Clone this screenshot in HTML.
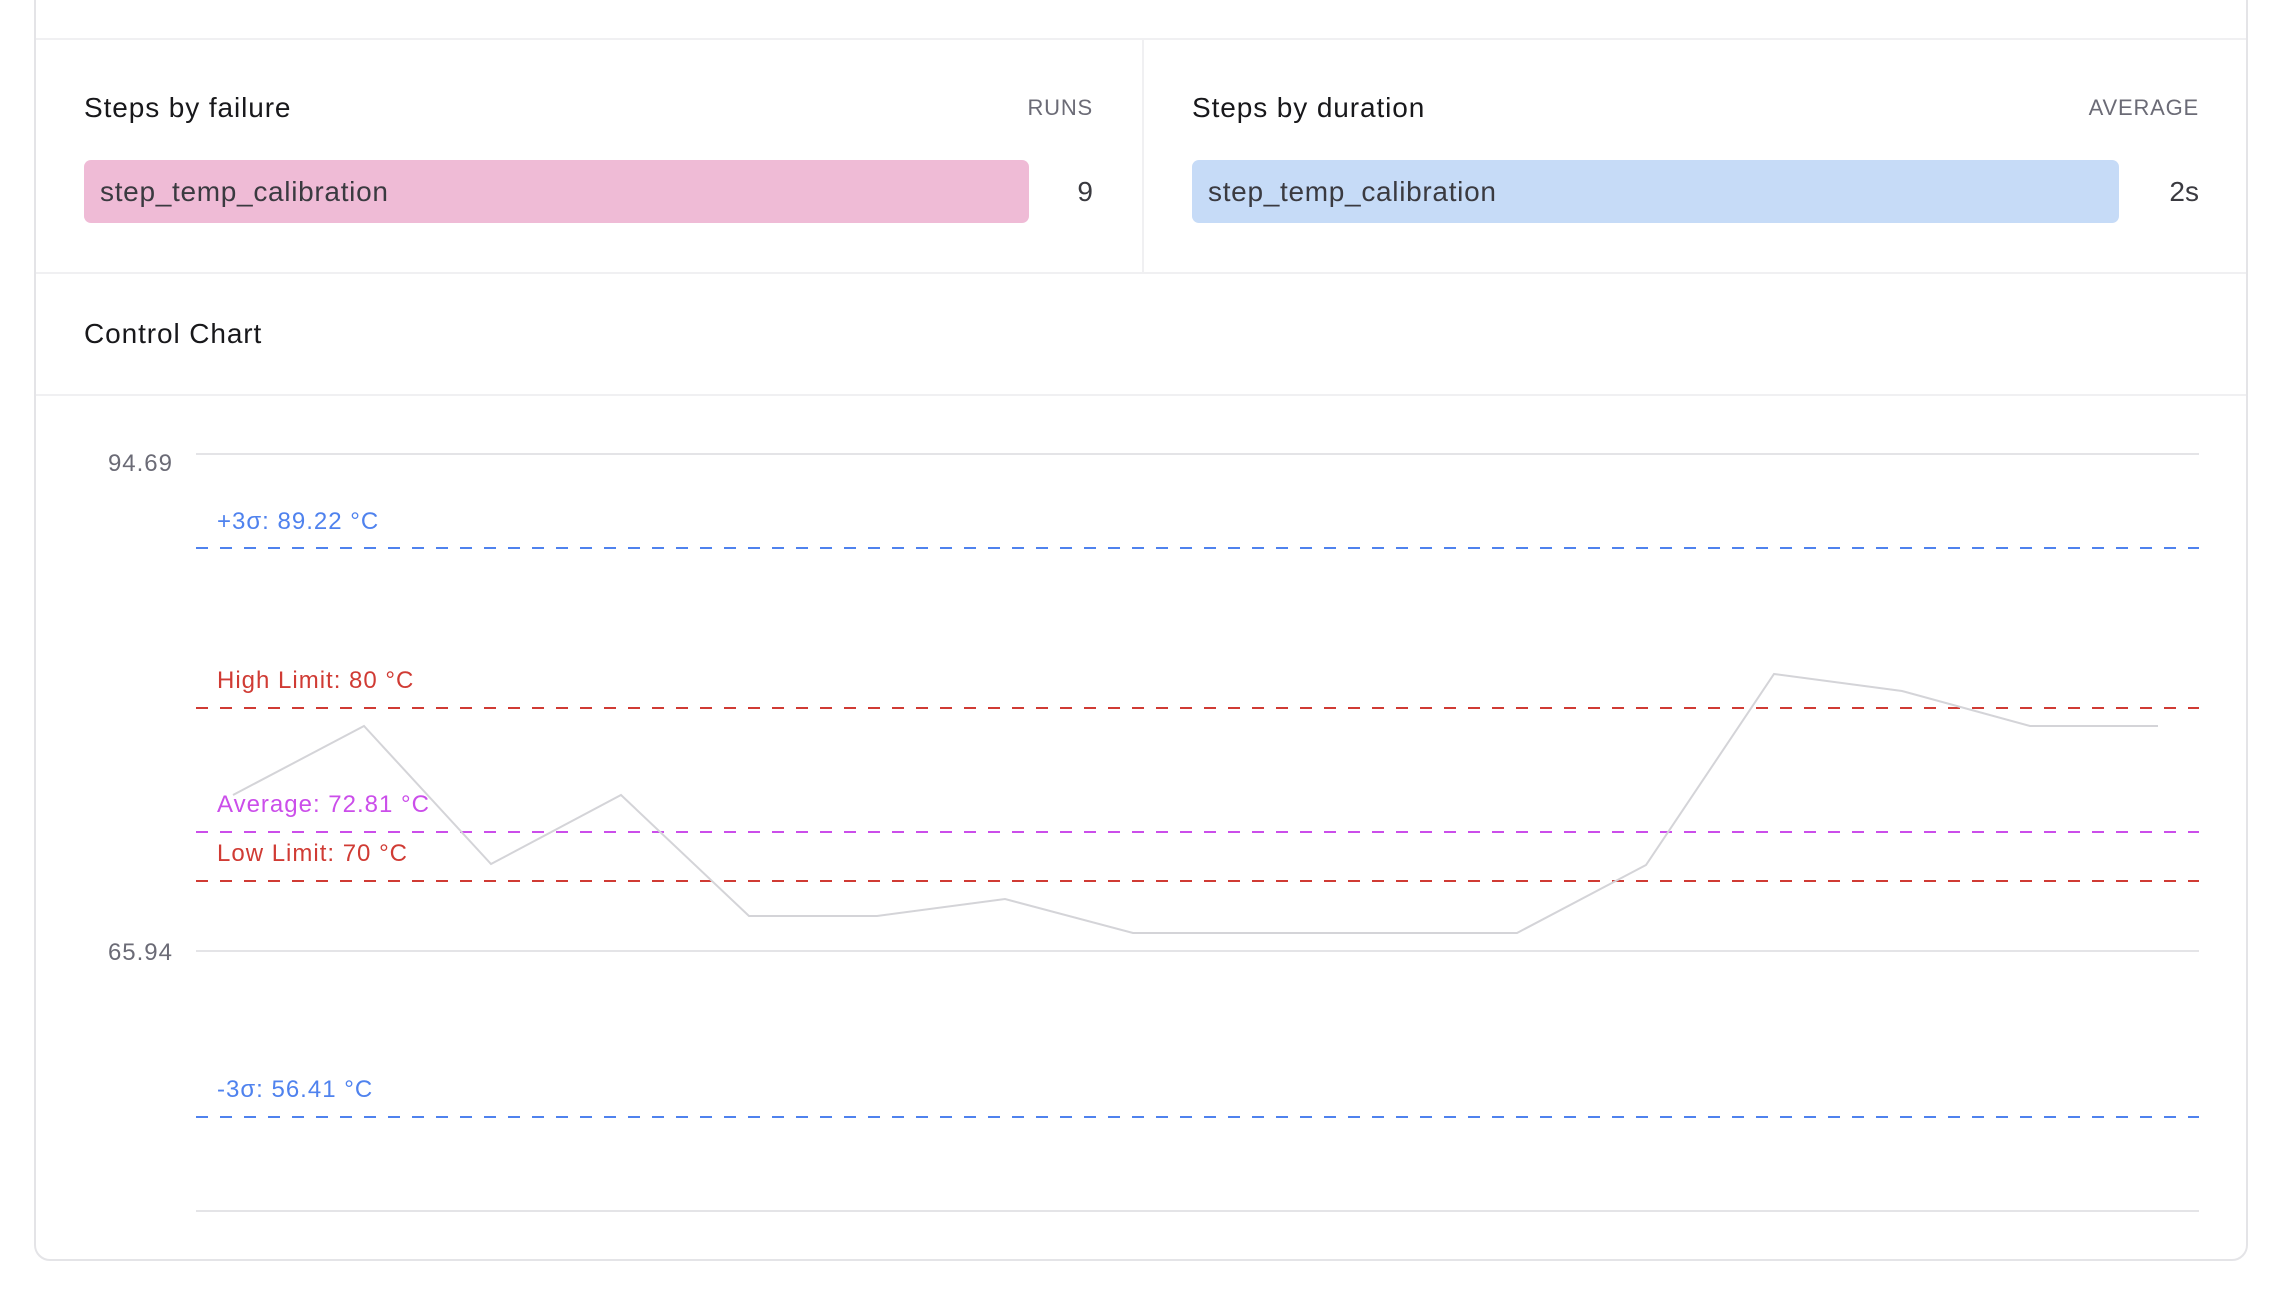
<!DOCTYPE html>
<html><head><meta charset="utf-8"><style>
html,body{margin:0;padding:0;background:#fff;width:2280px;height:1294px;overflow:hidden;font-family:"Liberation Sans",sans-serif}
.card{position:absolute;left:34px;top:-20px;width:2214px;height:1281px;border:2px solid #e4e4e7;border-radius:0 0 16px 16px;box-sizing:border-box}
.hl{position:absolute;left:36px;width:2210px;height:2px;background:#f0f0f2}
.vl{position:absolute;left:1142px;top:40px;width:2px;height:232px;background:#f0f0f2}
.t{position:absolute;font-size:28px;color:#18181b;font-weight:500;letter-spacing:0.9px}
.h{position:absolute;font-size:22px;color:#6b6b76;letter-spacing:.8px}
.bar{position:absolute;top:160px;height:63px;border-radius:7px;font-size:28px;color:#3a3a40;line-height:63px;padding-left:16px;box-sizing:border-box;letter-spacing:0.7px}
.n{position:absolute;top:160px;line-height:63px;font-size:28px;color:#3a3a40}
</style></head><body>
<div class="card"></div>
<div class="hl" style="top:38px"></div>
<div class="vl"></div>
<div class="hl" style="top:272px"></div>
<div class="hl" style="top:394px"></div>
<div class="t" style="left:84px;top:92px">Steps by failure</div>
<div class="h" style="right:1187px;top:95px">RUNS</div>
<div class="bar" style="left:84px;width:945px;background:#efbbd6">step_temp_calibration</div>
<div class="n" style="right:1187px">9</div>
<div class="t" style="left:1192px;top:92px">Steps by duration</div>
<div class="h" style="right:81px;top:95px">AVERAGE</div>
<div class="bar" style="left:1192px;width:927px;background:#c6dbf7">step_temp_calibration</div>
<div class="n" style="right:81px">2s</div>
<div class="t" style="left:84px;top:318px">Control Chart</div>
<svg width="2280" height="1294" style="position:absolute;left:0;top:0" font-family="Liberation Sans, sans-serif" font-size="24" letter-spacing="1">
<g stroke="#e4e4e7" stroke-width="2"><line x1="196" y1="454" x2="2199" y2="454"/><line x1="196" y1="951" x2="2199" y2="951"/><line x1="196" y1="1211" x2="2199" y2="1211"/></g>
<text x="173" y="471" text-anchor="end" fill="#6b6b76">94.69</text>
<text x="173" y="960" text-anchor="end" fill="#6b6b76">65.94</text>
<g stroke-width="2" stroke-dasharray="12 12">
<line x1="196" y1="548" x2="2199" y2="548" stroke="#4f82ee"/>
<line x1="196" y1="708" x2="2199" y2="708" stroke="#d03b34"/>
<line x1="196" y1="832" x2="2199" y2="832" stroke="#cb4eea"/>
<line x1="196" y1="881" x2="2199" y2="881" stroke="#d03b34"/>
<line x1="196" y1="1117" x2="2199" y2="1117" stroke="#4f82ee"/>
</g>
<polyline fill="none" stroke="#d4d4d8" stroke-width="2" points="233,795 364,726 491,864 621,795 749,916 877,916 1005,899 1133,933 1261,933 1389,933 1517,933 1646,865 1774,674 1902,691 2030,726 2158,726"/>
<text x="217" y="529" fill="#4f82ee">+3σ: 89.22 °C</text>
<text x="217" y="688" fill="#d03b34">High Limit: 80 °C</text>
<text x="217" y="812" fill="#cb4eea">Average: 72.81 °C</text>
<text x="217" y="861" fill="#d03b34">Low Limit: 70 °C</text>
<text x="217" y="1097" fill="#4f82ee">-3σ: 56.41 °C</text>
</svg>
</body></html>
